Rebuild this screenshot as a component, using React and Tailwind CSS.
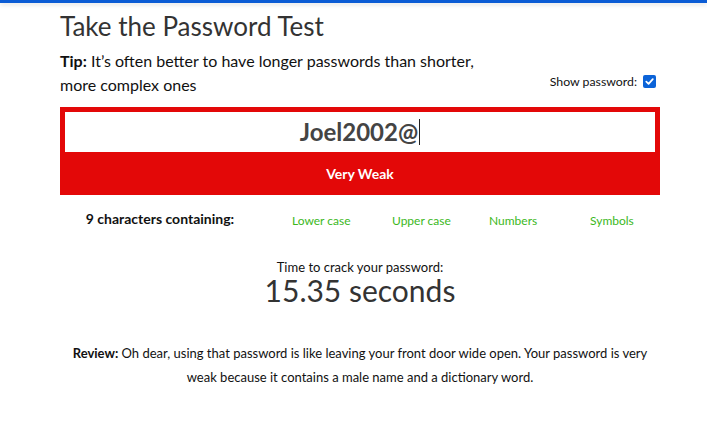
import React from "react";

export default function App() {
  return (
    <div className="min-h-[428px] w-[707px] bg-white font-['Lato','Noto_Sans',sans-serif] text-[#222]">
      <div className="h-[3px] bg-[#0b5cd5] shadow-[0_2px_4px_rgba(0,0,0,0.12)]" />
      <div className="ml-[60px] w-[600px]">
        <h1 className="mt-[7px] text-[26px] leading-[33px] text-[#333]">Take the Password Test</h1>
        <div className="mt-[6px] flex items-end justify-between">
          <p className="w-[440px] text-[16px] leading-[24px] text-[#111]">
            <span className="font-bold">Tip:</span> It’s often better to have longer passwords than shorter, more complex ones
          </p>
          <label className="mb-[6px] mr-[4px] flex items-center gap-[6px] text-[12.3px] text-[#111]">
            Show password:
            <span className="flex h-[13px] w-[13px] items-center justify-center rounded-[2px] bg-[#0b63d8]">
              <svg viewBox="0 0 12 12" className="h-[11px] w-[11px]">
                <path d="M2.5 6.2 L5 8.6 L9.6 3.4" fill="none" stroke="white" strokeWidth="1.9" strokeLinecap="round" strokeLinejoin="round" />
              </svg>
            </span>
          </label>
        </div>
        <div className="mt-[10px] bg-[#e30808] p-[5px] pb-0">
          <div className="flex h-[40px] items-center justify-center bg-white">
            <span className="text-[24px] font-bold text-[#444]">Joel2002@</span>
            <span className="ml-[1px] h-[26px] w-px bg-[#222]" />
          </div>
          <div className="flex h-[43px] items-center justify-center text-[14px] font-bold text-white">Very Weak</div>
        </div>
        <div className="mt-[13px] flex items-start">
          <div className="w-[200px] text-center text-[14px] font-bold text-[#111]">9 characters containing:</div>
          <div className="mt-[4px] flex pl-[32px] text-[12px] text-[#3cb81c]">
            <span className="w-[100px]">Lower case</span>
            <span className="w-[97px]">Upper case</span>
            <span className="w-[101px]">Numbers</span>
            <span>Symbols</span>
          </div>
        </div>
        <div className="mt-[30px] text-center">
          <div className="text-[13px] leading-[15px] text-[#111]">Time to crack your password:</div>
          <div className="text-[30px] leading-[31px] text-[#333]">15.35 seconds</div>
        </div>
        <p className="mt-[35px] text-center text-[13px] leading-[24px] text-[#111]">
          <span className="font-bold">Review:</span> Oh dear, using that password is like leaving your front door wide open. Your password is very weak because it contains a male name and a dictionary word.
        </p>
      </div>
    </div>
  );
}
